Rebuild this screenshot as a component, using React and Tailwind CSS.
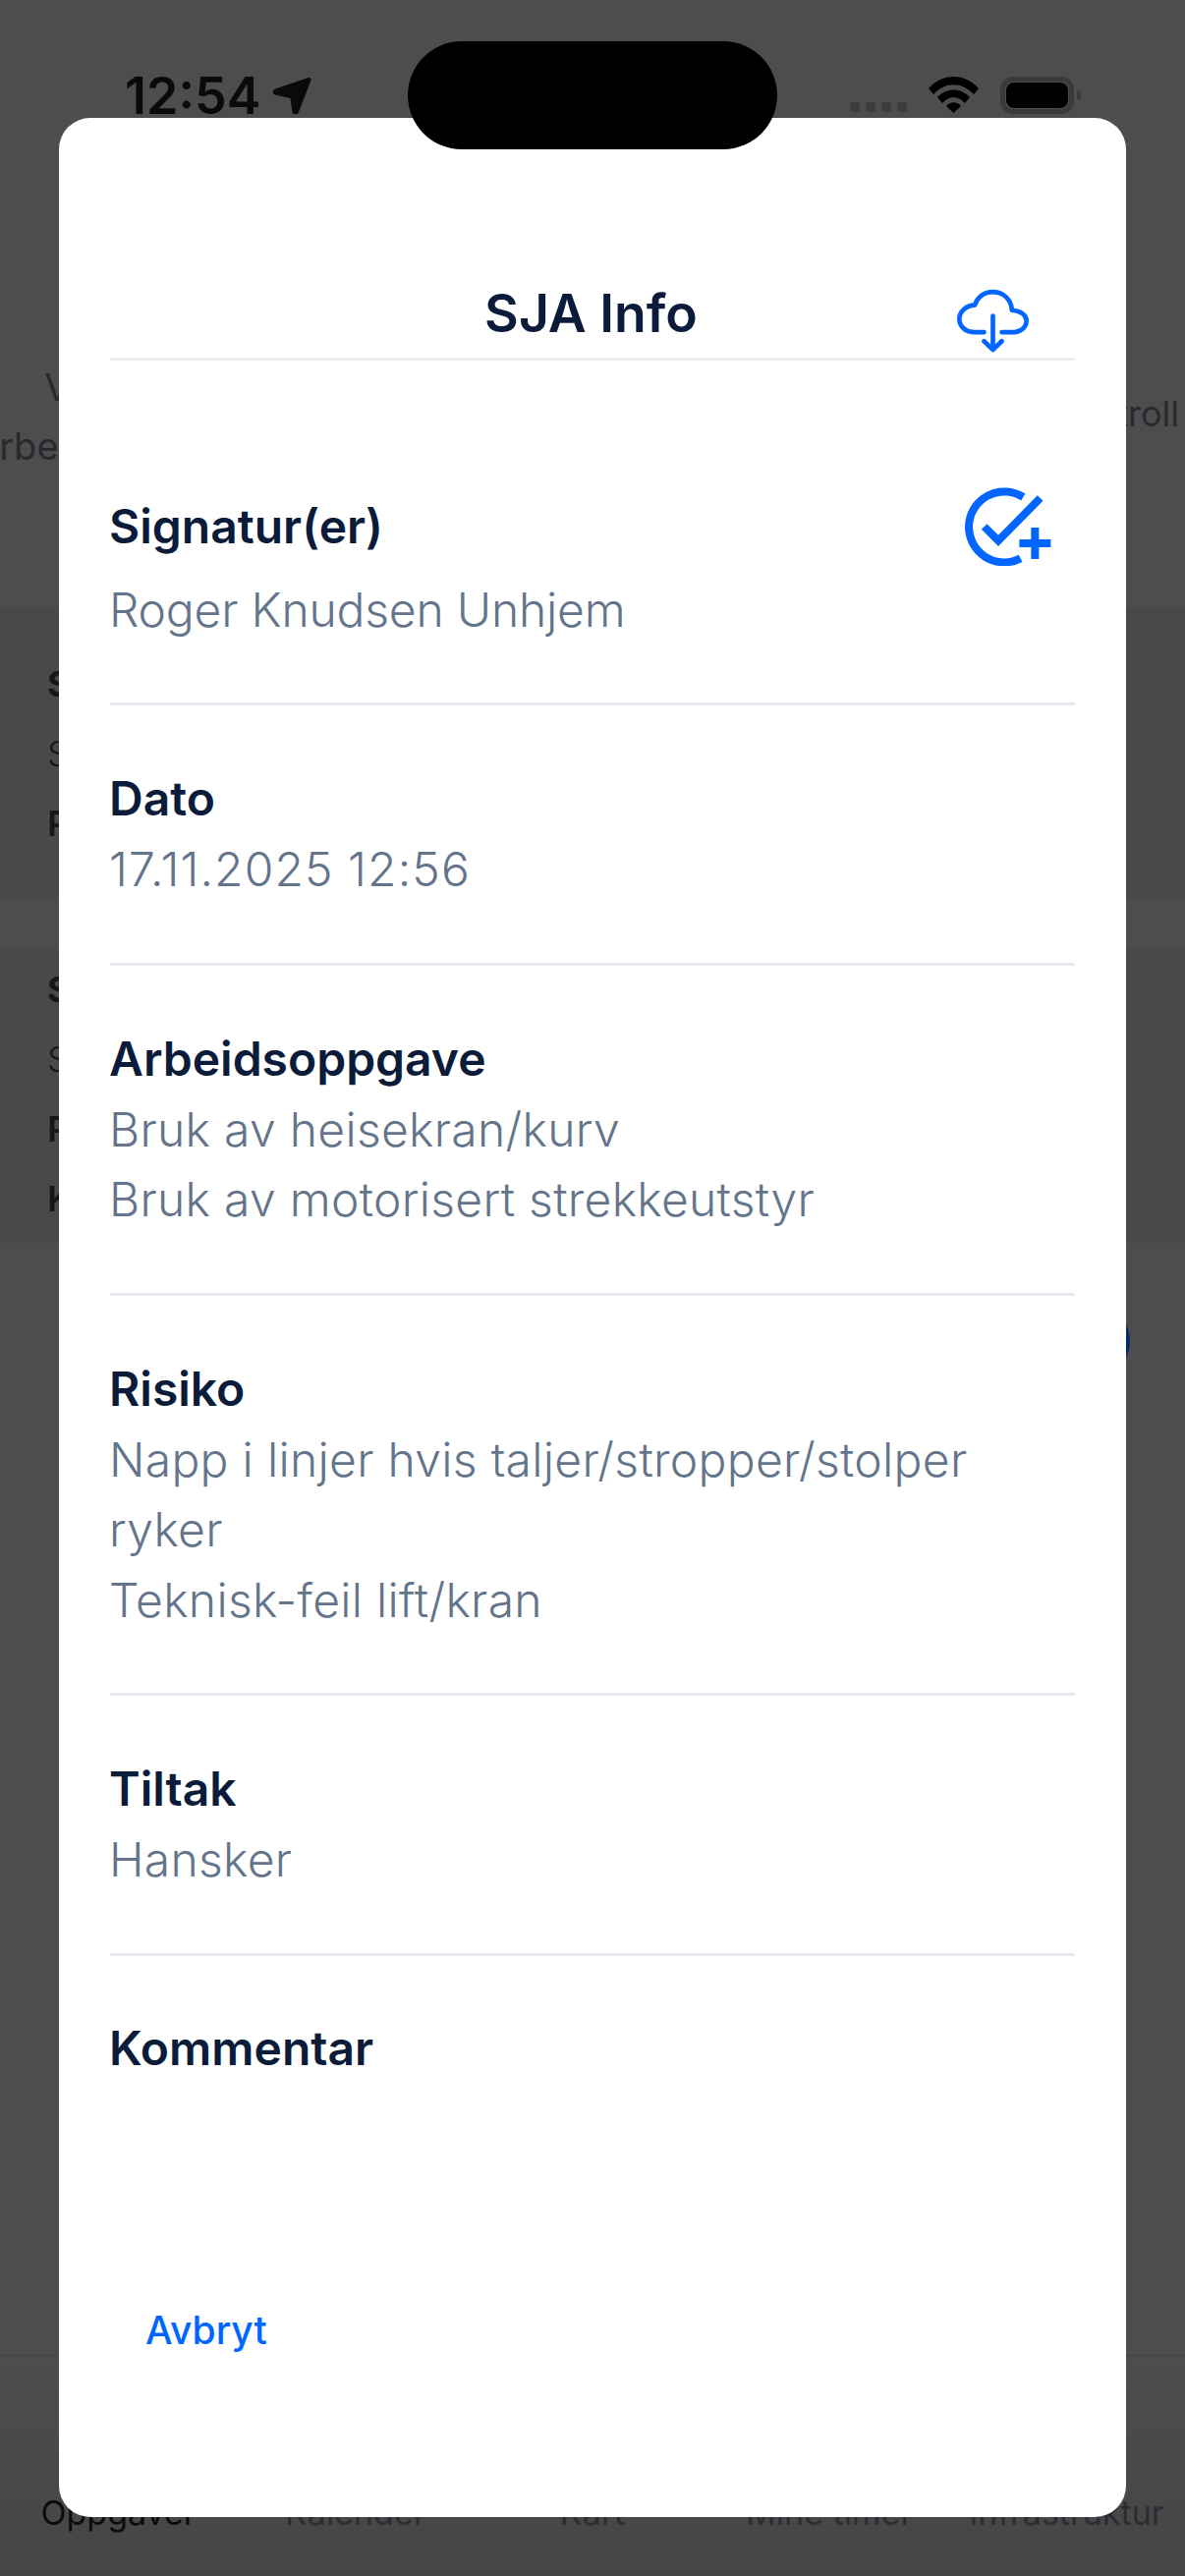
import React from 'react';

const font = { fontFamily: 'Inter, sans-serif' };

function CloudIcon() {
  return (
    <svg width="77" height="67" viewBox="95 70 230 200" fill="none" stroke="#0066ff" strokeWidth="14" strokeLinecap="round" strokeLinejoin="round">
      <path d="M183 205 H155 C128 205 108 188 108 165 C108 142 128 124 155 122 C163 98 184 82 210 82 C242 82 266 106 268 138 C294 140 312 152 312 170 C312 190 294 205 268 205 H237" />
      <path d="M210 155 V258 M183 232 L210 258 L237 232" />
    </svg>
  );
}

function SignIcon() {
  return (
    <svg width="90" height="80" viewBox="122 675 270 240" fill="none" stroke="#0066ff" strokeWidth="24">
      <path d="M306 705 A108 108 0 1 0 298 892" />
      <path d="M187 795 L230 838 L358 708" />
      <path d="M294 846 H390 M342 798 V894" />
    </svg>
  );
}

function Row({ label, lines, spacing = 'tracking-[0.3px]' }) {
  return (
    <div className="border-b-[3px] border-[#e6e9f0] py-[59px]">
      <div className="-ml-[1px] text-[48px] leading-[72px] font-semibold text-[#0a1c3a]">{label}</div>
      {lines.map((line) => (
        <div key={line} className={`-ml-[1px] text-[48px] leading-[71.5px] font-light text-[#64748b] ${spacing}`}>{line}</div>
      ))}
    </div>
  );
}

function BgCard({ children, className }) {
  return <div className={`bg-[#48494b] pl-12 ${className}`}>{children}</div>;
}

export default function App() {
  return (
    <div className="relative w-[1206px] h-[2622px] overflow-hidden bg-[#4d4d4d] flex flex-col" style={font}>
      {/* status bar */}
      <div className="h-[160px] pt-[70px] pl-[127px] pr-[106px] flex items-start justify-between shrink-0">
        <div className="flex items-center gap-[12px]">
          <span className="text-[52px] leading-[56px] font-semibold text-[#0a0a0a]">12:54</span>
          <svg width="40" height="40" viewBox="0 0 40 40" fill="#0a0a0a">
            <path d="M37 1 C38.5 0.5 40 2 39.5 3.5 L27 36 C26 39 21 39 20.5 36 L18.5 22 L3 18.5 C0 18 0 13.5 3 12.5 Z" />
          </svg>
        </div>
        <div className="flex items-end gap-[22px] pt-[8px]">
          <div className="flex gap-[6px] mb-[1px]">
            <div className="w-[10px] h-[10px] rounded-[3px] bg-[#3d3d3d]"></div>
            <div className="w-[10px] h-[10px] rounded-[3px] bg-[#3d3d3d]"></div>
            <div className="w-[10px] h-[10px] rounded-[3px] bg-[#3d3d3d]"></div>
            <div className="w-[10px] h-[10px] rounded-[3px] bg-[#3d3d3d]"></div>
          </div>
          <svg width="51" height="37" viewBox="0 0 51 37" fill="#000">
            <path d="M0 12 C14 -4 37 -4 51 12 L46 18 C34 5 17 5 5 18 Z" />
            <path d="M9 21 C18 11 33 11 42 21 L37 27 C30 19 21 19 14 27 Z" />
            <path d="M18 30 C22 25 29 25 33 30 L25.5 37 Z" />
          </svg>
          <div className="flex items-center gap-[3px] -mb-[1px]">
            <div className="w-[75px] h-[38px] rounded-[13px] border-[5px] border-[#3a3a3a] p-[1px]">
              <div className="w-full h-full rounded-[8px] bg-black"></div>
            </div>
            <div className="w-[4px] h-[10px] rounded-r-full bg-[#3a3a3a]"></div>
          </div>
        </div>
      </div>

      {/* page behind the dialog */}
      <div className="h-[458px] shrink-0 flex items-center justify-between pt-[130px] pb-[60px] text-[36px] leading-[60px] text-[#26292e]">
        <div className="text-center text-[38px] -ml-[27px] w-[296px] whitespace-nowrap">
          <div>Vaktliste</div>
          <div>Arbeidsoppgaver</div>
        </div>
        <div className="mr-[6px] pb-[6px]">Kontroll</div>
      </div>
      <BgCard className="h-[297px] pt-[43px] text-[36px] leading-[71px] text-[#15171a]">
        <div className="font-bold">SJA</div>
        <div className="font-light">Signert</div>
        <div className="font-semibold">Prosjekt</div>
      </BgCard>
      <div className="h-[50px] shrink-0"></div>
      <BgCard className="h-[300px] pt-[7px] text-[36px] leading-[71px] text-[#15171a]">
        <div className="font-bold">SJA</div>
        <div className="font-light">Signert</div>
        <div className="font-semibold">Prosjekt</div>
        <div className="font-semibold">Kunde</div>
      </BgCard>

      <div className="mt-auto h-[226px] border-t-[3px] border-[#484848] bg-gradient-to-b from-[#4d4d4d] to-[#454545] grid grid-cols-5 text-center whitespace-nowrap pt-[137px] text-[34px] leading-[44px] text-[#2a2d33]">
        <span className="text-[#0a0c10]">Oppgaver</span>
        <span>Kalender</span>
        <span>Kart</span>
        <span>Mine timer</span>
        <span>Infrastruktur</span>
      </div>

      {/* floating button peeking out behind the dialog */}
      <div className="absolute left-[1070px] top-[1325px] w-[80px] h-[80px] rounded-full bg-[#0a2a66]"></div>

      {/* dialog */}
      <div className="absolute left-[60px] top-[120px] w-[1086px] h-[2442px] bg-white rounded-[32px] px-[52px] pt-[163px] flex flex-col">
        <div className="grid grid-cols-[1fr_auto_1fr] items-center border-b-[3px] border-[#eeeeee] h-[84px] pb-[12px]">
          <div></div>
          <div className="-ml-[3px] -mt-[6px] text-[53.5px] leading-[72px] font-semibold text-[#0a1c3a]">SJA Info</div>
          <div className="flex justify-end pr-[45px] pt-[10px]">
            <CloudIcon />
          </div>
        </div>

        <div className="border-b-[3px] border-[#e6e9f0] pt-[133px] pb-[58px]">
          <div className="flex items-center justify-between pr-[24px] h-[72px]">
            <div className="-ml-[1px] text-[48px] leading-[72px] font-semibold text-[#0a1c3a]">Signatur(er)</div>
            <SignIcon />
          </div>
          <div className="-ml-[1px] mt-[13px] text-[48px] leading-[72px] font-light tracking-[-0.2px] text-[#64748b]">Roger Knudsen Unhjem</div>
        </div>

        <Row label="Dato" lines={['17.11.2025 12:56']} spacing="tracking-[1.1px]" />
        <Row label="Arbeidsoppgave" lines={['Bruk av heisekran/kurv', 'Bruk av motorisert strekkeutstyr']} />
        <Row label="Risiko" lines={['Napp i linjer hvis taljer/stropper/stolper', 'ryker', 'Teknisk-feil lift/kran']} />
        <Row label="Tiltak" lines={['Hansker']} />

        <div className="-ml-[1px] pt-[58px] text-[48px] leading-[72px] font-semibold text-[#0a1c3a]">Kommentar</div>

        <div className="mt-[223px] pl-[36px] text-[39px] leading-[56px] font-medium text-[#0066ff]">Avbryt</div>
      </div>

      {/* dynamic island */}
      <div className="absolute left-[415px] top-[42px] w-[376px] h-[110px] rounded-[55px] bg-black"></div>
    </div>
  );
}
